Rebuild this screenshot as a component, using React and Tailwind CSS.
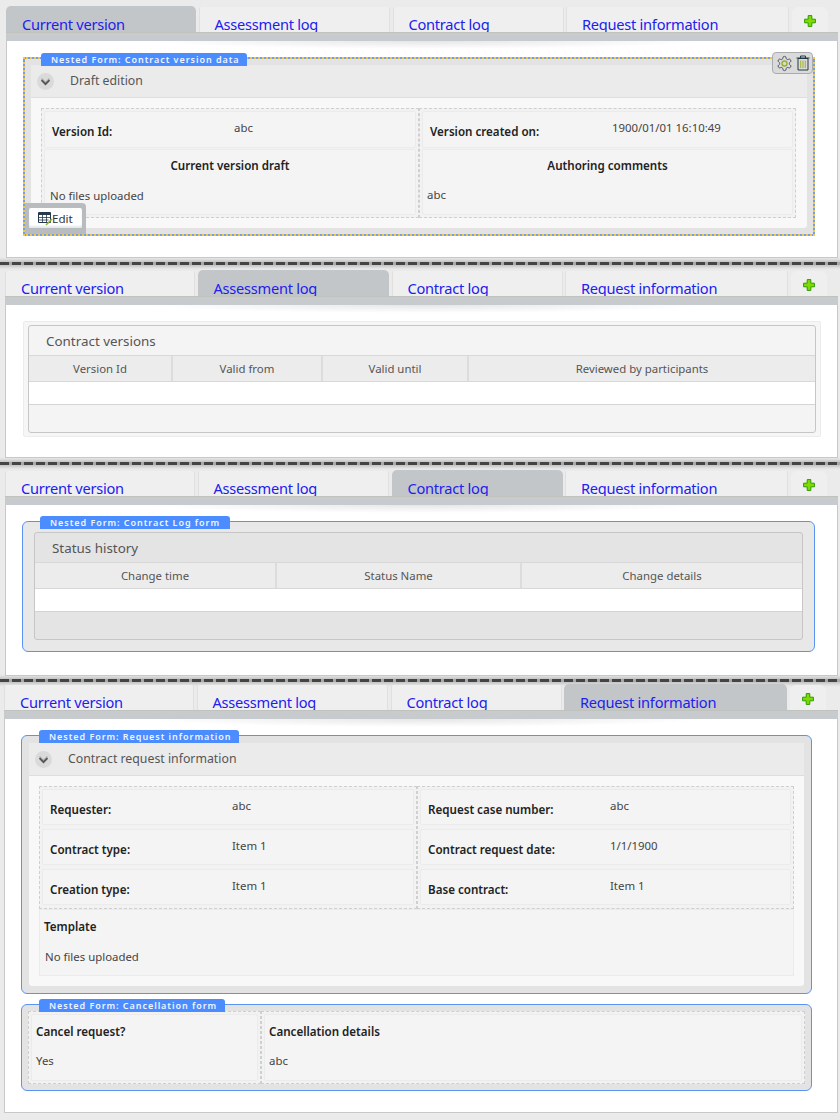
import React from "react";

const SANS = "font-['Noto_Sans','Open_Sans',sans-serif]";

function Plus() {
  return (
    <svg width="12" height="12" viewBox="0 0 12 12" className="block">
      <path d="M4.2 .6h3.6v3.6h3.6v3.6H7.8v3.6H4.2V7.8H.6V4.2h3.6z" fill="#7fdc00" stroke="#2f9a00" strokeWidth="1" />
    </svg>
  );
}

function Tabs({ active }) {
  const tabs = [
    ["Current version", "w-[190px]", "mr-[2.5px]"],
    ["Assessment log", "w-[191.5px]", "mr-[2.5px]"],
    ["Contract log", "w-[171.5px]", "mr-[2px]"],
    ["Request information", "w-[222.5px]", "mr-[3.5px]"],
  ];
  return (
    <div className="flex h-[26px] items-end">
      {tabs.map(([label, w, mr], i) => (
        <div
          key={label}
          className={
            i === active
              ? `${w} ${mr} h-[26px] overflow-hidden rounded-t-[5px] bg-[#c3c6c9] pl-[16px] pt-[5px] text-[14.6px] leading-[26px] tracking-[-0.25px] text-[#2020f0] whitespace-nowrap`
              : `${w} ${mr} h-[25px] overflow-hidden rounded-t-[2px] border-x border-[#e0e0e0] bg-[#efefef] pl-[15px] pt-[4px] text-[14.6px] leading-[26px] tracking-[-0.25px] text-[#2020f0] whitespace-nowrap`
          }
        >
          {label}
        </div>
      ))}
      <div className="flex h-[25px] w-[36px] justify-center rounded-t-[6px] bg-[#efefef] pt-[8px]">
        <Plus />
      </div>
    </div>
  );
}

function Panel({ active, outer, body, children }) {
  return (
    <section className={outer}>
      <Tabs active={active} />
      <div className="h-[9px] border-t border-[#bfc2bd] bg-[#c8cbcd]" />
      <div className={`relative border border-t-0 border-[#c8c8c8] bg-white ${body}`}>
        <div className="pointer-events-none absolute left-[140px] top-0 h-[8px] w-[560px] bg-[radial-gradient(ellipse_50%_100%_at_50%_0%,#e6e6e6_0%,rgba(255,255,255,0)_100%)]" />
        <div className="relative">{children}</div>
      </div>
    </section>
  );
}

function Separator() {
  return (
    <div className="h-[3px] bg-[repeating-linear-gradient(90deg,#444_0px,#444_9px,#a8a8a8_9px,#a8a8a8_12px)] shadow-[0_0_3px_2px_rgba(120,120,120,0.35)]" />
  );
}

function Badge({ children, w, left }) {
  return (
    <div className={`absolute top-[-6px] h-[13px] rounded-t-[3px] bg-[#4b8cff] pl-[10px] text-[9px] font-semibold leading-[13px] tracking-[0.95px] text-[#f0f5ff] whitespace-nowrap ${w} ${left}`}>
      {children}
    </div>
  );
}

function Chevron() {
  return (
    <div className="flex h-[17px] w-[17px] items-center justify-center rounded-full bg-[#dadada]">
      <svg width="11" height="9" viewBox="0 0 11 9">
        <path d="M1.5 1.5 5.5 5.5 9.5 1.5" fill="none" stroke="#b0b0b0" strokeWidth="1.4" />
        <path d="M1.5 3.2 5.5 7.2 9.5 3.2" fill="none" stroke="#555" strokeWidth="1.8" />
      </svg>
    </div>
  );
}

function Header({ title }) {
  return (
    <div className="flex h-[33px] items-center border-b border-[#dedede] bg-[#ebebeb] pl-[6px] text-[12.3px] text-[#555]">
      <Chevron />
      <span className="ml-[16px]">{title}</span>
    </div>
  );
}

function Field({ label, value, h }) {
  return (
    <div className={`flex rounded-[2px] border border-[#ebebeb] bg-[#f4f4f4] text-[11.4px] ${h}`}>
      <div className="w-[189px] shrink-0 pl-[7px] pt-[12px] text-[11.6px] font-semibold leading-[16px] text-[#222]">{label}</div>
      <div className="pt-[8px] leading-[16px] text-[#444]">{value}</div>
    </div>
  );
}

function Toolbar() {
  return (
    <div className="absolute right-[0px] top-[-7px] flex h-[22px] w-[41px] items-center justify-center gap-[3px] rounded-[4px] border border-[#a9acae] bg-[#d9dad9]">
      <svg width="17" height="17" viewBox="0 0 24 24" fill="none" stroke="#3d4b5c" strokeWidth="1.3">
        <path d="M12.22 2h-.44a2 2 0 0 0-2 2v.18a2 2 0 0 1-1 1.73l-.43.25a2 2 0 0 1-2 0l-.15-.08a2 2 0 0 0-2.73.73l-.22.38a2 2 0 0 0 .73 2.73l.15.1a2 2 0 0 1 1 1.72v.51a2 2 0 0 1-1 1.74l-.15.09a2 2 0 0 0-.73 2.73l.22.38a2 2 0 0 0 2.73.73l.15-.08a2 2 0 0 1 2 0l.43.25a2 2 0 0 1 1 1.73V20a2 2 0 0 0 2 2h.44a2 2 0 0 0 2-2v-.18a2 2 0 0 1 1-1.73l.43-.25a2 2 0 0 1 2 0l.15.08a2 2 0 0 0 2.73-.73l.22-.39a2 2 0 0 0-.73-2.73l-.15-.08a2 2 0 0 1-1-1.74v-.5a2 2 0 0 1 1-1.74l.15-.09a2 2 0 0 0 .73-2.73l-.22-.38a2 2 0 0 0-2.73-.73l-.15.08a2 2 0 0 1-2 0l-.43-.25a2 2 0 0 1-1-1.73V4a2 2 0 0 0-2-2z" />
        <circle cx="12" cy="12" r="3.5" stroke="#9ab030" strokeWidth="2" />
      </svg>
      <svg width="14" height="16" viewBox="0 0 14 16" fill="none">
        <path d="M.5 3h13M4.5 3V1h5v2" stroke="#25384a" strokeWidth="1" />
        <path d="M2 3.5h10V15H2z" stroke="#25384a" strokeWidth="1" />
        <path d="M4.7 5.5V13M7 5.5V13M9.3 5.5V13" stroke="#a3b83a" strokeWidth="1.1" />
      </svg>
    </div>
  );
}

function EditButton() {
  return (
    <div className="absolute bottom-0 left-0 rounded-tr-[4px] bg-[#b9bcbe] pb-[6px] pl-[4px] pr-[4px] pt-[5px]">
      <div className="flex h-[20px] w-[53px] items-center rounded-[2px] bg-white pl-[9px] pt-[1px] text-[11.6px] text-[#333] shadow-[inset_0_-2px_2px_#e4e8ee]">
        <svg width="15" height="15" viewBox="0 0 15 15" fill="none" className="shrink-0">
          <path d="M.5 1.5h12v10H.5z" stroke="#26384c" strokeWidth="1" />
          <path d="M.5 2h12v2H.5z" fill="#26384c" />
          <path d="M.5 6.5h12M.5 9h10M4.5 4v7.5M8.5 4v7.5" stroke="#26384c" strokeWidth="0.8" />
          <path d="M8 14 14 8" stroke="#8cb82c" strokeWidth="1.6" />
        </svg>
        <span className="-ml-[1px]">Edit</span>
      </div>
    </div>
  );
}

function DataTable({ title, cols, shaded, box }) {
  return (
    <div className={`overflow-hidden rounded-[3px] border border-[#c6c6c6] text-[11.4px] ${shaded} ${box}`}>
      <div className="flex h-[29px] items-center pt-[2px] text-[13.4px] text-[#555]">{title}</div>
      <div className="flex h-[27px] border-y border-[#d8d8d8] bg-[#ececec] text-[#555]">
        {cols.map(([c, w], i) => (
          <div
            key={c}
            className={`flex items-center justify-center ${w} ${i < cols.length - 1 ? "border-r-2 border-[#dcdcdc]" : ""}`}
          >
            {c}
          </div>
        ))}
      </div>
      <div className="h-[23px] border-b border-[#d4d4d4] bg-white" />
      <div className="h-[28px]" />
    </div>
  );
}

export default function App() {
  return (
    <div className={`h-[1120px] w-[840px] overflow-hidden bg-[#ebebeb] ${SANS}`}>
      <Panel active={0} outer="h-[262px] pl-[6px] pr-[2px] pt-[6px]" body="h-[217px] pl-[16px] pt-[16px]">
        <div className="relative h-[179px] w-[792px] border-2 border-[#6f9ff0] bg-[#e3e3e3] px-[6px] pt-[6px] outline-2 outline-dotted -outline-offset-2 outline-[#f6c544]">
          <Badge w="w-[206px]" left="left-[16px]">Nested Form: Contract version data</Badge>
          <Toolbar />
          <div className="h-[163px] overflow-hidden rounded-b-[3px] bg-[#f8f8f8]">
            <Header title="Draft edition" />
            <div className="flex px-[10px] pt-[10px]">
              <div className="flex h-[110px] w-[378px] flex-col border border-dashed border-[#cfcfcf] bg-[#f2f2f2] px-[2px] py-[2px]">
                <Field label="Version Id:" value="abc" h="h-[37px]" />
                <div className="mt-[1px] h-[66px] rounded-[2px] border border-[#ebebeb] bg-[#f4f4f4] text-[11.4px]">
                  <div className="pt-[8px] text-center text-[11.6px] font-semibold leading-[16px] text-[#222]">Current version draft</div>
                  <div className="pl-[5px] pt-[14px] leading-[16px] text-[#444]">No files uploaded</div>
                </div>
              </div>
              <div className="flex h-[110px] w-[377px] flex-col border border-dashed border-[#cfcfcf] bg-[#f2f2f2] px-[2px] py-[2px]">
                <Field label="Version created on:" value="1900/01/01 16:10:49" h="h-[37px]" />
                <div className="mt-[1px] h-[66px] rounded-[2px] border border-[#ebebeb] bg-[#f4f4f4] text-[11.4px]">
                  <div className="pt-[8px] text-center text-[11.6px] font-semibold leading-[16px] text-[#222]">Authoring comments</div>
                  <div className="pl-[4px] pt-[13px] leading-[16px] text-[#444]">abc</div>
                </div>
              </div>
            </div>
          </div>
          <EditButton />
        </div>
      </Panel>
      <Separator />

      <Panel active={1} outer="h-[197px] pl-[5px] pr-[2px] pt-[5px]" body="h-[153px] pl-[17px] pt-[16px]">
        <div className="h-[116px] w-[798px] rounded-[2px] border border-[#ececec] bg-[#f6f6f6] pb-[3px] pl-[4px] pr-[3px] pt-[3px]">
          <DataTable
            title={<span className="pl-[17px]">Contract versions</span>}
            shaded="bg-[#f4f4f4]"
            box="h-[108px] w-[788px]"
            cols={[
              ["Version Id", "w-[144px]"],
              ["Valid from", "w-[150px]"],
              ["Valid until", "w-[146px]"],
              ["Reviewed by participants", "flex-1"],
            ]}
          />
        </div>
      </Panel>
      <Separator />

      <Panel active={2} outer="h-[214px] pl-[5px] pr-[2px] pt-[5px]" body="h-[171px] pl-[16px] pt-[16px]">
        <div className="relative h-[131px] w-[793px] rounded-[6px] border border-[#5b93f0] bg-[#e8e8e8] px-[11px] pt-[10px]">
          <Badge w="w-[190px]" left="left-[17px]">Nested Form: Contract Log form</Badge>
          <DataTable
            title={<span className="pl-[17px]">Status history</span>}
            shaded="bg-[#e4e4e4]"
            box="h-[108px] w-[769px]"
            cols={[
              ["Change time", "w-[242px]"],
              ["Status Name", "w-[245px]"],
              ["Change details", "flex-1"],
            ]}
          />
        </div>
      </Panel>
      <Separator />

      <Panel active={3} outer="pl-[4px] pr-[2px] pt-[2px]" body="h-[394px] pl-[16px] pt-[16px]">
        <div className="relative h-[259px] w-[791px] rounded-[6px] border border-[#5b93f0] bg-[#e3e3e3] px-[7px] pt-[7px]">
          <Badge w="w-[200px]" left="left-[17px]">Nested Form: Request information</Badge>
          <div className="h-[243px] overflow-hidden rounded-b-[3px] bg-[#f8f8f8]">
            <Header title="Contract request information" />
            <div className="px-[10px] pt-[10px]">
              <div className="flex">
                <div className="flex h-[123px] w-[378px] flex-col gap-[4px] border border-dashed border-[#cfcfcf] bg-[#f2f2f2] px-[2px] py-[2px]">
                  <Field label="Requester:" value="abc" h="h-[36px]" />
                  <Field label="Contract type:" value="Item 1" h="h-[36px]" />
                  <Field label="Creation type:" value="Item 1" h="h-[36px]" />
                </div>
                <div className="flex h-[123px] w-[377px] flex-col gap-[4px] border border-dashed border-[#cfcfcf] bg-[#f2f2f2] px-[2px] py-[2px]">
                  <Field label="Request case number:" value="abc" h="h-[36px]" />
                  <Field label="Contract request date:" value="1/1/1900" h="h-[36px]" />
                  <Field label="Base contract:" value="Item 1" h="h-[36px]" />
                </div>
              </div>
              <div className="h-[67px] w-[755px] border border-[#ebebeb] bg-[#f4f4f4] pl-[4px] text-[11.4px]">
                <div className="pt-[9px] text-[11.6px] font-semibold leading-[16px] text-[#222]">Template</div>
                <div className="pl-[1px] pt-[14px] leading-[16px] text-[#444]">No files uploaded</div>
              </div>
            </div>
          </div>
        </div>
        <div className="relative mt-[10px] h-[87px] w-[791px] rounded-[6px] border border-[#5b93f0] bg-[#e3e3e3] px-[6px] pt-[6px]">
          <Badge w="w-[186px]" left="left-[17px]">Nested Form: Cancellation form</Badge>
          <div className="flex h-[73px] w-[777px]">
            <div className="h-[73px] w-[233px] border border-dashed border-[#cfcfcf] bg-[#f2f2f2] p-[2px]">
              <div className="h-[67px] rounded-[2px] border border-[#ebebeb] bg-[#f4f4f4] pl-[4px] text-[11.4px]">
                <div className="pt-[9px] text-[11.6px] font-semibold leading-[16px] text-[#222]">Cancel request?</div>
                <div className="pt-[13px] leading-[16px] text-[#444]">Yes</div>
              </div>
            </div>
            <div className="h-[73px] flex-1 border border-dashed border-[#cfcfcf] bg-[#f2f2f2] p-[2px]">
              <div className="h-[67px] rounded-[2px] border border-[#ebebeb] bg-[#f4f4f4] pl-[4px] text-[11.4px]">
                <div className="pt-[9px] text-[11.6px] font-semibold leading-[16px] text-[#222]">Cancellation details</div>
                <div className="pt-[13px] leading-[16px] text-[#444]">abc</div>
              </div>
            </div>
          </div>
        </div>
      </Panel>
    </div>
  );
}
